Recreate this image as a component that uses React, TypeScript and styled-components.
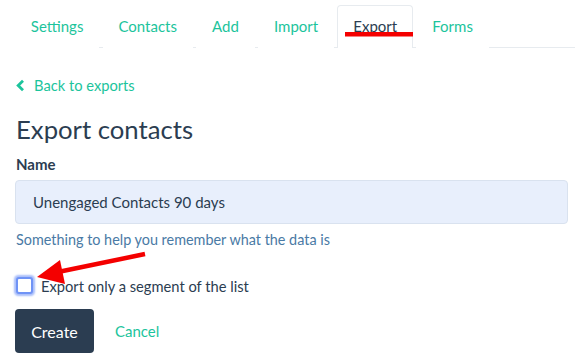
import React from "react";
import styled, { createGlobalStyle } from "styled-components";

const Global = createGlobalStyle`
  html, body { margin: 0; padding: 0; background: #fff; }
  body { font-family: Lato, "Open Sans", sans-serif; -webkit-font-smoothing: antialiased; }
  * { box-sizing: border-box; }
`;

const GREEN = "#1cc49c";
const NAVY = "#2b3d51";

const Page = styled.div`
  position: relative;
  width: 575px;
  height: 364px;
  overflow: hidden;
  padding: 5px 0 0 14px;
`;

const Tabs = styled.nav`
  display: flex;
  height: 43px;
  margin-left: 1px;
  border-bottom: 1px solid #e7ebef;
`;

const Tab = styled.div<{ $active?: boolean }>`
  display: flex;
  align-items: center;
  padding: 0 14.8px 2px;
  margin-right: 3.5px;
  font-size: 15px;
  color: ${(p) => (p.$active ? NAVY : GREEN)};
  border: 1px solid ${(p) => (p.$active ? "#e7ebef" : "transparent")};
  border-bottom: none;
  border-radius: 4px 4px 0 0;
  background: #fff;
  margin-bottom: -1px;
`;

const Body = styled.div`
  display: flex;
  flex-direction: column;
  align-items: flex-start;
  padding-right: 7px;
`;

const BackLink = styled.a`
  display: flex;
  align-items: center;
  gap: 9px;
  margin-top: 27px;
  padding-left: 1px;
  font-size: 14.7px;
  color: ${GREEN};
  text-decoration: none;
  line-height: 20px;
`;

const Heading = styled.h1`
  margin: 18px 0 0 2px;
  font-size: 25.7px;
  font-weight: 400;
  color: ${NAVY};
  line-height: 32px;
`;

const Label = styled.label`
  margin: 9px 0 0 2px;
  font-size: 15px;
  font-weight: 700;
  color: ${NAVY};
  line-height: 20px;
`;

const Input = styled.div`
  align-self: stretch;
  margin: 6px 0 0 1px;
  height: 44px;
  display: flex;
  align-items: center;
  padding: 0 17px;
  background: #e8effc;
  border: 1px solid #d9e2ef;
  border-radius: 4px;
  font-size: 15px;
  color: ${NAVY};
`;

const Help = styled.div`
  margin: 6px 0 0 2px;
  font-size: 14.4px;
  color: #4a7aa5;
  line-height: 20px;
`;

const CheckRow = styled.label`
  display: flex;
  align-items: flex-start;
  gap: 8.5px;
  margin-top: 26px;
  font-size: 14.7px;
  color: ${NAVY};
  line-height: 20px;
`;

const Box = styled.span`
  width: 17px;
  height: 17px;
  margin: 1px 0 0 1.5px;
  border: 2px solid #6f93f6;
  border-radius: 3px;
  box-shadow: 0 0 2px 1.5px #a9befa;
  background: #fff;
`;

const Actions = styled.div`
  display: flex;
  align-items: center;
  gap: 21px;
  margin: 13px 0 0 1px;
`;

const Button = styled.button`
  height: 44px;
  width: 79px;
  border: none;
  border-radius: 4px;
  background: ${NAVY};
  color: #fff;
  font-family: inherit;
  font-size: 16px;
  font-weight: 400;
`;

const CancelLink = styled.a`
  font-size: 15px;
  color: ${GREEN};
`;

const Annotation = styled.svg`
  position: absolute;
  left: 0;
  top: 0;
  pointer-events: none;
`;

export default function App() {
  const tabs = ["Settings", "Contacts", "Add", "Import", "Export", "Forms"];
  return (
    <>
      <Global />
      <Page>
        <Tabs>
          {tabs.map((t) => (
            <Tab key={t} $active={t === "Export"}>
              {t}
            </Tab>
          ))}
        </Tabs>
        <Body>
          <BackLink>
            <svg width="10" height="13" viewBox="0 0 10 13">
              <path d="M8 1.8 L3.2 6.5 L8 11.2" fill="none" stroke={GREEN} strokeWidth="2.8" />
            </svg>
            Back to exports
          </BackLink>
          <Heading>Export contacts</Heading>
          <Label>Name</Label>
          <Input>Unengaged Contacts 90 days</Input>
          <Help>Something to help you remember what the data is</Help>
          <CheckRow>
            <Box />
            Export only a segment of the list
          </CheckRow>
          <Actions>
            <Button>Create</Button>
            <CancelLink>Cancel</CancelLink>
          </Actions>
        </Body>
        <Annotation width="575" height="364" viewBox="0 0 575 364">
          <rect x="345" y="32" width="68" height="4.5" fill="#f40000" />
          <line x1="145" y1="254" x2="58" y2="272" stroke="#f40000" strokeWidth="4.5" />
          <polygon points="37,277 60,260 65,284" fill="#f40000" />
        </Annotation>
      </Page>
    </>
  );
}
